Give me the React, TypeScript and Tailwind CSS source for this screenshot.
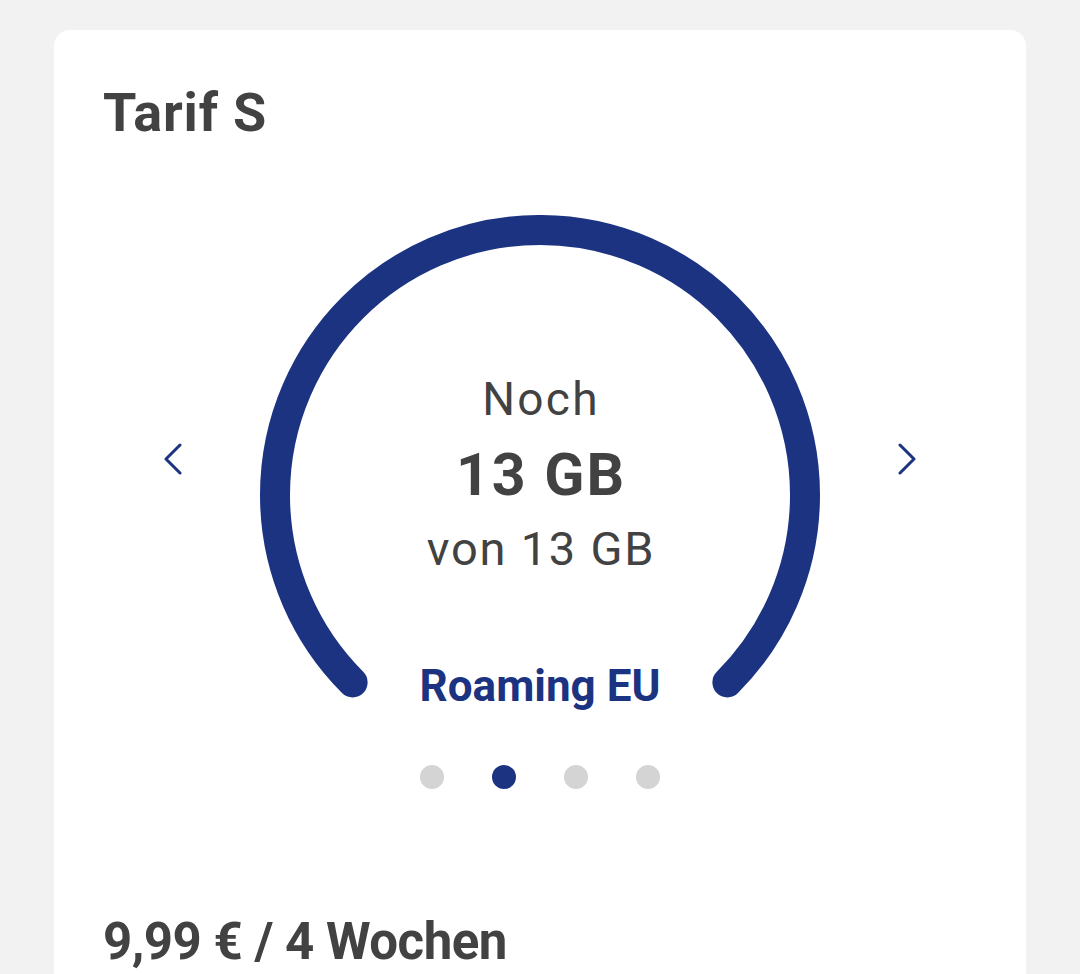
import { useState } from "react";

const BLUE = "#1c3381";

function Chevron({ dir }: { dir: "left" | "right" }) {
  return (
    <svg width="22" height="32" viewBox="0 0 22 32" fill="none" className="mt-[228px]">
      <polyline
        points={dir === "left" ? "17,2 3,16 17,30" : "5,2 19,16 5,30"}
        stroke={BLUE}
        strokeWidth="3"
        strokeLinecap="round"
        strokeLinejoin="round"
      />
    </svg>
  );
}

function Gauge() {
  return (
    <div className="grid w-[560px] h-[500px]">
      <svg
        width="560"
        height="500"
        viewBox="0 0 560 500"
        className="col-start-1 row-start-1"
      >
        <path
          d="M 92.62 467.38 A 265 265 0 1 1 467.38 467.38"
          fill="none"
          stroke={BLUE}
          strokeWidth="30"
          strokeLinecap="round"
        />
      </svg>
      <div className="col-start-1 row-start-1 flex flex-col items-center pt-[146px] text-[#424242]">
        <span className="text-[46px] leading-[76px] tracking-[2.3px] pl-[2px]">Noch</span>
        <span className="text-[59px] leading-[76px] font-bold tracking-[2px] pl-[2px]">13 GB</span>
        <span className="text-[47px] leading-[72px] tracking-[1.75px] pl-[2px]">von 13 GB</span>
        <span className="mt-[76px] text-[44px] leading-[50px] font-bold text-[#1c3381]">
          Roaming EU
        </span>
      </div>
    </div>
  );
}

export default function App() {
  const [active] = useState(1);

  return (
    <div className="min-h-screen bg-[#f2f2f2] px-[54px] pt-[30px] font-['Roboto',sans-serif]">
      <div className="bg-white rounded-2xl pl-[49px] pr-[49px] pt-[53px] pb-16">
        <h1 className="text-[54px] leading-[60px] font-bold tracking-[0.8px] text-[#424242]">
          Tarif S
        </h1>

        <div className="mt-[72px] flex justify-center items-start gap-[75px]">
          <Chevron dir="left" />
          <Gauge />
          <Chevron dir="right" />
        </div>

        <div className="mt-[50px] flex justify-center gap-[48px]">
          {[0, 1, 2, 3].map((i) => (
            <span
              key={i}
              className={
                i === active
                  ? "w-6 h-6 rounded-full bg-[#1c3381]"
                  : "w-6 h-6 rounded-full bg-[#d4d4d4]"
              }
            />
          ))}
        </div>

        <p className="mt-[123px] text-[51px] leading-[60px] font-bold tracking-[-0.5px] text-[#424242]">
          9,99 € / 4 Wochen
        </p>
      </div>
    </div>
  );
}
